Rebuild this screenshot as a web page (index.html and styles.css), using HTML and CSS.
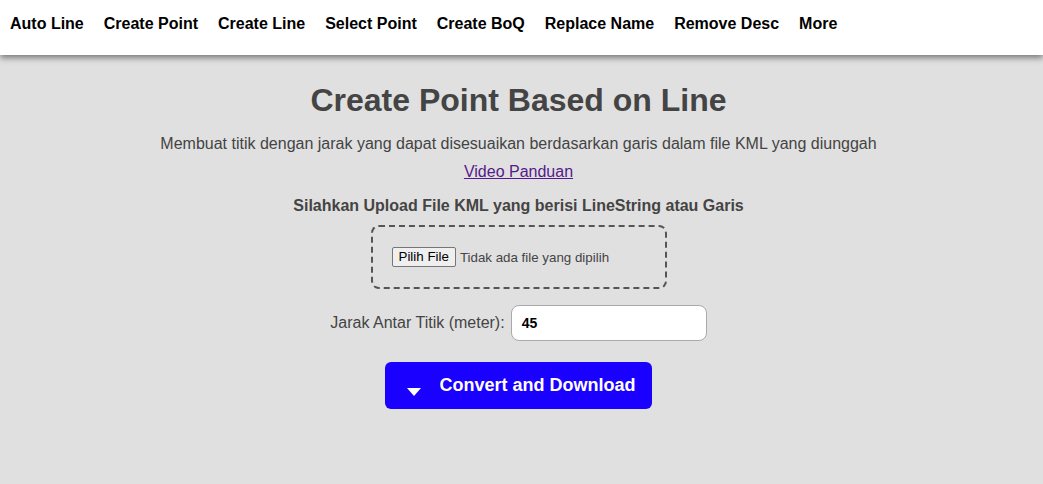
FILE: index.html
```html
<!DOCTYPE html>
<html lang="id">
<head>
<meta charset="utf-8">
<title>Create Point Based on Line</title>
<link rel="stylesheet" href="styles.css">
</head>
<body>
<nav class="navbar">
  <a class="nav-item" href="#">Auto Line</a>
  <a class="nav-item" href="#">Create Point</a>
  <a class="nav-item" href="#">Create Line</a>
  <a class="nav-item" href="#">Select Point</a>
  <a class="nav-item" href="#">Create BoQ</a>
  <a class="nav-item" href="#">Replace Name</a>
  <a class="nav-item" href="#">Remove Desc</a>
  <a class="nav-item" href="#">More</a>
</nav>
<main class="content">
  <h1 class="title">Create Point Based on Line</h1>
  <p class="desc">Membuat titik dengan jarak yang dapat disesuaikan berdasarkan garis dalam file KML yang diunggah</p>
  <a class="video-link" href="#">Video Panduan</a>
  <p class="upload-label">Silahkan Upload File KML yang berisi LineString atau Garis</p>
  <div class="dropzone">
    <label class="file-input">
      <span class="file-btn">Pilih File</span>
      <span class="file-name">Tidak ada file yang dipilih</span>
    </label>
  </div>
  <div class="field">
    <span class="field-label">Jarak Antar Titik (meter):</span>
    <span class="field-input">45</span>
  </div>
  <button class="convert-btn" type="button">
    <svg class="caret" width="14" height="8" viewBox="0 0 14 8"><path d="M0 0 H14 L7 8 Z" fill="#fff"/></svg>
    <span>Convert and Download</span>
  </button>
</main>
</body>
</html>
```
FILE: styles.css
```css
html, body {
  margin: 0;
  padding: 0;
}
body {
  background: #e0e0e0;
  font-family: "Liberation Sans", Arial, sans-serif;
  color: #444;
  height: 484px;
  overflow: hidden;
}
.navbar {
  background: #fff;
  height: 55px;
  display: flex;
  align-items: flex-start;
  box-shadow: 0 3px 6px rgba(0,0,0,0.45);
}
.nav-item {
  color: #000;
  font-weight: bold;
  font-size: 16px;
  text-decoration: none;
  padding: 15px 10px 0 10px;
  line-height: 18px;
}
.content {
  display: flex;
  flex-direction: column;
  align-items: center;
  padding-right: 6px;
}
.title {
  font-size: 32px;
  font-weight: bold;
  color: #444;
  margin: 27px 0 0 0;
  line-height: 37px;
}
.desc {
  font-size: 16px;
  margin: 16px 0 0 0;
  line-height: 18px;
}
.video-link {
  font-size: 16px;
  color: #551a8b;
  margin-top: 10px;
  line-height: 18px;
}
.upload-label {
  font-size: 16px;
  font-weight: bold;
  margin: 16px 0 0 0;
  line-height: 18px;
}
.dropzone {
  margin-top: 10px;
  width: 292px;
  height: 60px;
  border: 2px dashed #555;
  border-radius: 8px;
  display: flex;
  align-items: center;
  box-sizing: content-box;
}
.file-input {
  display: flex;
  align-items: center;
  margin-left: 19px;
  font-size: 13.333px;
}
.file-btn {
  background: #efefef;
  border: 1px solid #767676;
  border-radius: 2px;
  color: #000;
  padding: 1px 6px;
  line-height: 16px;
}
.file-name {
  margin-left: 4px;
  color: #444;
}
.field {
  margin-top: 16px;
  display: flex;
  align-items: center;
  gap: 6px;
}
.field-label {
  font-size: 16px;
}
.field-input {
  width: 176px;
  height: 34px;
  background: #fff;
  border: 1px solid #aaa;
  border-radius: 8px;
  padding: 0 8px 0 10px;
  font-size: 14px;
  font-weight: bold;
  color: #000;
  display: flex;
  align-items: center;
  box-sizing: content-box;
}
.convert-btn {
  margin-top: 21px;
  width: 267px;
  height: 47px;
  background: #1a00ff;
  border: none;
  border-radius: 6px;
  color: #fff;
  font-family: "Liberation Sans", Arial, sans-serif;
  font-size: 18px;
  font-weight: bold;
  display: flex;
  align-items: center;
  justify-content: center;
  gap: 18px;
  padding: 0 0 0 6px;
}
.caret {
  margin-top: 12px;
}
```
